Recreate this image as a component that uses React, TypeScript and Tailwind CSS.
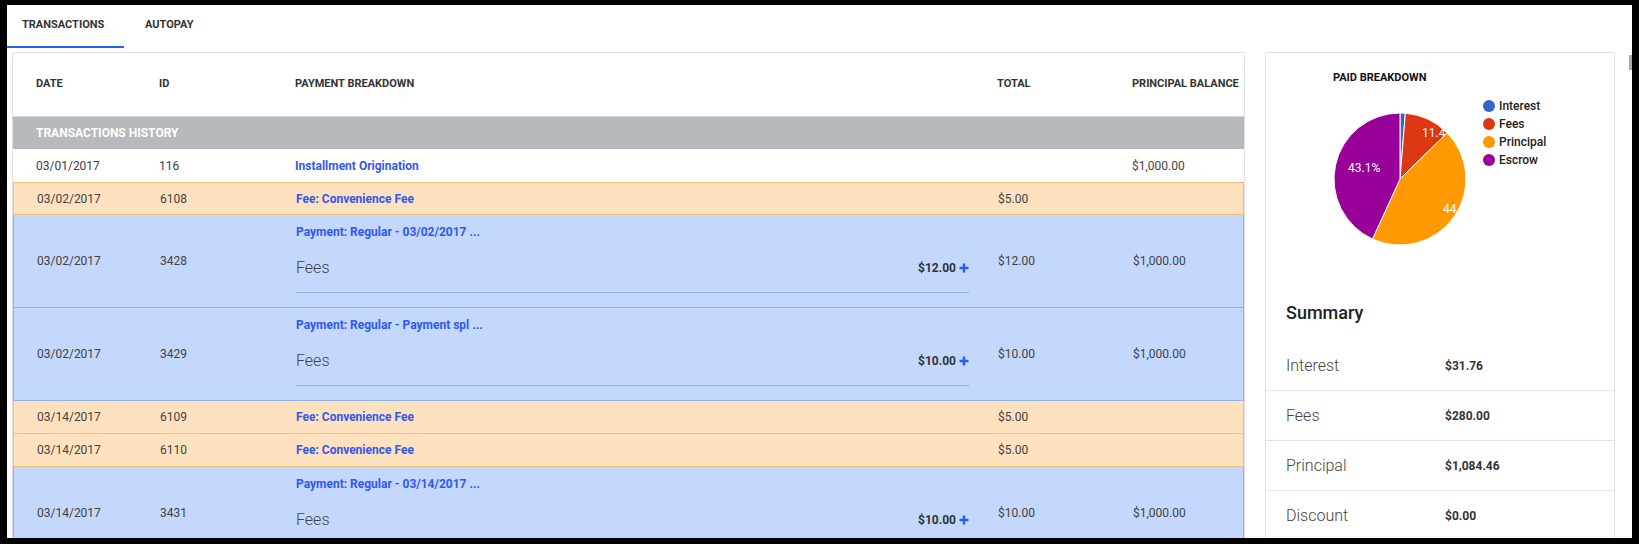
import React from "react";

type Row = {
    date: string;
    id: string;
    kind: "plain" | "fee" | "payment";
    title: string;
    fees?: string;
    total: string;
    balance: string;
};

const rows: Row[] = [
    { date: "03/01/2017", id: "116", kind: "plain", title: "Installment Origination", total: "", balance: "$1,000.00" },
    { date: "03/02/2017", id: "6108", kind: "fee", title: "Fee: Convenience Fee", total: "$5.00", balance: "" },
    { date: "03/02/2017", id: "3428", kind: "payment", title: "Payment: Regular - 03/02/2017 ...", fees: "$12.00", total: "$12.00", balance: "$1,000.00" },
    { date: "03/02/2017", id: "3429", kind: "payment", title: "Payment: Regular - Payment spl ...", fees: "$10.00", total: "$10.00", balance: "$1,000.00" },
    { date: "03/14/2017", id: "6109", kind: "fee", title: "Fee: Convenience Fee", total: "$5.00", balance: "" },
    { date: "03/14/2017", id: "6110", kind: "fee", title: "Fee: Convenience Fee", total: "$5.00", balance: "" },
    { date: "03/14/2017", id: "3431", kind: "payment", title: "Payment: Regular - 03/14/2017 ...", fees: "$10.00", total: "$10.00", balance: "$1,000.00" },
];

const summary = [
    { label: "Interest", value: "$31.76" },
    { label: "Fees", value: "$280.00" },
    { label: "Principal", value: "$1,084.46" },
    { label: "Discount", value: "$0.00" },
];

const cols = "grid grid-cols-[123px_136px_702px_135px_1fr] pl-[23px]";

function PlusIcon() {
    return (
        <svg width="10" height="10" viewBox="0 0 10 10" className="ml-[3px]">
            <path d="M5 0.5v9M0.5 5h9" stroke="#2a5cf5" strokeWidth="2.4" />
        </svg>
    );
}

function TxRow({ row, first }: { row: Row; first: boolean }) {
    if (row.kind === "payment") {
        return (
            <div className={`${cols} h-[93px] items-center bg-[#c4d7fd] border-x border-b border-[#8db0f7]`}>
                <div>{row.date}</div>
                <div>{row.id}</div>
                <div className="flex flex-col h-full pr-[29px]">
                    <div className="h-[34px] flex items-center font-bold text-[#3158f0]">{row.title}</div>
                    <div className="h-[44px] flex items-center justify-between pb-[6px] border-b border-[#8db0f7]">
                        <span className="text-[16px] font-light text-[#444]">Fees</span>
                        <span className="flex items-center font-bold text-[#333]">
                            {row.fees}
                            <PlusIcon />
                        </span>
                    </div>
                </div>
                <div>{row.total}</div>
                <div>{row.balance}</div>
            </div>
        );
    }
    const tone =
        row.kind === "fee"
            ? `bg-[#fee1bf] border-x border-b border-[#f0bf7c] ${first ? "border-t" : ""}`
            : "";
    return (
        <div className={`${cols} h-[33px] items-center ${tone}`}>
            <div>{row.date}</div>
            <div>{row.id}</div>
            <div className="font-bold text-[#3158f0]">{row.title}</div>
            <div>{row.total}</div>
            <div>{row.balance}</div>
        </div>
    );
}

// pie chart geometry, angles in degrees clockwise from top
const cx = 134;
const cy = 126;
const r = 66;
const pt = (a: number) => {
    const rad = (a * Math.PI) / 180;
    return `${(cx + r * Math.sin(rad)).toFixed(2)} ${(cy - r * Math.cos(rad)).toFixed(2)}`;
};
const slice = (a0: number, a1: number) =>
    `M${cx} ${cy} L${pt(a0)} A${r} ${r} 0 ${a1 - a0 > 180 ? 1 : 0} 1 ${pt(a1)} Z`;

function PaidChart() {
    const legend = [
        { label: "Interest", color: "#3366cc" },
        { label: "Fees", color: "#dc3912" },
        { label: "Principal", color: "#ff9900" },
        { label: "Escrow", color: "#990099" },
    ];
    return (
        <svg width="348" height="230" className="block font-[Roboto,sans-serif]">
            <defs>
                <clipPath id="pieClip">
                    <circle cx={cx} cy={cy} r={r} />
                </clipPath>
            </defs>
            <text x="67" y="28" fontSize="11" fontWeight="700" fill="#111">
                PAID BREAKDOWN
            </text>
            <path d={slice(0, 4.65)} fill="#3366cc" stroke="#fff" strokeWidth="1" />
            <path d={slice(4.65, 45.7)} fill="#dc3912" stroke="#fff" strokeWidth="1" />
            <text x="156" y="84" fontSize="12" fill="#fff">11.4%</text>
            <path d={slice(45.7, 204.6)} fill="#ff9900" stroke="#fff" strokeWidth="1" />
            <text x="177" y="160" fontSize="12" fill="#fff" clipPath="url(#pieClip)">44.1%</text>
            <path d={slice(204.6, 360)} fill="#990099" stroke="#fff" strokeWidth="1" />
            <text x="82" y="119" fontSize="12" fill="#fff">43.1%</text>
            {legend.map((l, i) => (
                <g key={l.label}>
                    <circle cx="223" cy={53 + i * 18} r="6" fill={l.color} />
                    <text x="233" y={57 + i * 18} fontSize="12" fontWeight="500" fill="#222">
                        {l.label}
                    </text>
                </g>
            ))}
        </svg>
    );
}

export default function App() {
    return (
        <div className="h-[544px] overflow-hidden bg-black pt-[5px] px-[7px] pb-[6px] font-[Roboto,sans-serif]">
            <div className="h-full bg-white overflow-hidden flex">
                <div className="flex-1 flex flex-col">
                    {/* Tabs */}
                    <div className="flex shrink-0 h-[43px] text-[11px] font-bold text-[#333]">
                        <div className="w-[117px] pl-[15px] flex items-center border-b-2 border-[#2262f0]">
                            TRANSACTIONS
                        </div>
                        <div className="pl-[21px] flex items-center pb-[2px]">AUTOPAY</div>
                    </div>

                    <div className="flex shrink-0 items-start gap-[20px] pl-[5px] mt-[4px]">
                        {/* Transactions table */}
                        <div className="w-[1233px] shrink-0 border border-[#e0e0e6] rounded-[2px] text-[12px] text-[#424242]">
                            <div className={`${cols} h-[63px] items-center text-[11px] font-bold text-[#333]`}>
                                <div>DATE</div>
                                <div>ID</div>
                                <div>PAYMENT BREAKDOWN</div>
                                <div>TOTAL</div>
                                <div>PRINCIPAL BALANCE</div>
                            </div>
                            <div className="h-[33px] flex items-center pl-[23px] bg-[#b6b9bd] border-t border-[#d4d6d9] text-[12px] font-bold text-white">
                                TRANSACTIONS HISTORY
                            </div>
                            {rows.map((row, i) => (
                                <TxRow key={row.id} row={row} first={i > 0 && rows[i - 1].kind === "plain"} />
                            ))}
                        </div>

                        {/* Paid breakdown + summary */}
                        <div className="w-[350px] shrink-0 border border-[#e0e0e6] rounded-[2px]">
                            <PaidChart />
                            <div className="h-[58px] flex items-center pl-[20px] text-[18px] font-medium text-[#222]">
                                Summary
                            </div>
                            {summary.map((s) => (
                                <div key={s.label} className="h-[50px] flex items-center pl-[20px] border-b border-[#e4e4ec]">
                                    <div className="w-[159px] text-[16px] font-light text-[#444]">{s.label}</div>
                                    <div className="text-[12px] font-bold text-[#333]">{s.value}</div>
                                </div>
                            ))}
                        </div>
                    </div>
                </div>

                {/* scrollbar */}
                <div className="w-[3px] shrink-0">
                    <div className="mt-[50px] h-[15px] bg-[#a9a9a9]" />
                </div>
            </div>
        </div>
    );
}
